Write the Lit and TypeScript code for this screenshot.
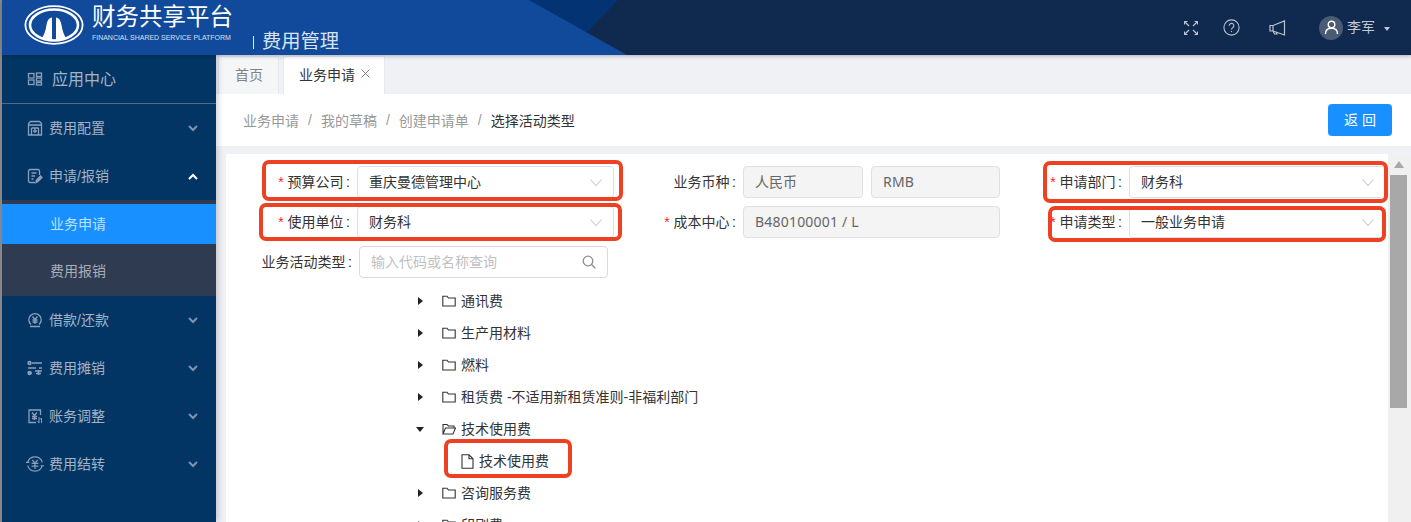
import { LitElement, html, css, svg } from "lit";
import { customElement } from "lit/decorators.js";

const ico = (b: unknown) => html`<svg class="mi" viewBox="0 0 16 16" fill="none" stroke="currentColor" stroke-width="1.3">${b}</svg>`;
const icons: Record<string, unknown> = {
  apps: ico(svg`<rect x="1.5" y="2.5" width="5.5" height="4.5"/><rect x="1.5" y="9" width="5.5" height="4.5"/><rect x="9.5" y="2" width="5" height="3.5"/><rect x="9.5" y="7" width="5" height="3"/><rect x="9.5" y="11.5" width="5" height="2.5"/>`),
  config: ico(svg`<path d="M1.5 15V3.5L3.5 1.5H12.5L14.5 3.5V15Z"/><path d="M1.5 5H14.5M4.5 8H11.5M4.5 8V15M11.5 8V15M8 8V13M6 11H10"/>`),
  apply: ico(svg`<path d="M8 14.5H3A1.5 1.5 0 0 1 1.5 13V3A1.5 1.5 0 0 1 3 1.5H11A1.5 1.5 0 0 1 12.5 3V7"/><path d="M4.5 5H9.5M4.5 8H8M4.5 11H6.5"/><path d="M9 14.5L9.5 12L13.5 8L15 9.5L11 13.5Z" fill="currentColor"/>`),
  loan: ico(svg`<path d="M4 12.5A6.2 6.2 0 1 1 12 12.5"/><path d="M3 14.5H13M5.5 4.5L8 7.5L10.5 4.5M8 7.5V12M5.5 8H10.5M5.5 10H10.5"/>`),
  amort: ico(svg`<g stroke-width="1.6"><circle cx="2.5" cy="3" r="1.4"/><path d="M5 3H15M1 8H9M12 8H15M1 13H5"/><circle cx="2.5" cy="13" r="1.4"/><path d="M8 11H15M9 13.5H14M11.5 10V15"/></g>`),
  adjust: ico(svg`<path d="M13.5 7V2H2V14.5H9"/><path d="M5 4.5L7.5 7.5L10 4.5M7.5 7.5V12M5 8.5H10M5 10.5H10"/><path d="M12 9V15M14.5 10V15M10.5 13L12 15M13 11.5L14.5 10" stroke-width="1"/>`),
  carry: html`<svg class="mi big" viewBox="0 0 16 16" fill="none" stroke="currentColor" stroke-width="1.1"><path d="M1.5 6.5A6.8 6.8 0 0 1 14.5 6.5M14.5 9.500A6.8 6.8 0 0 1 1.5 9.500"/><path d="M5.500 4.500L8 7L10.500 4.500M8 7V12.500M5 7.500H11M5 9.800H11"/><path d="M0 6.500H3M13 9.500H16" stroke-width="1"/></svg>`,
};

const menus = [
  { k: "config", t: "费用配置" },
  { k: "apply", t: "申请/报销", open: true },
  { k: "loan", t: "借款/还款" },
  { k: "amort", t: "费用摊销" },
  { k: "adjust", t: "账务调整" },
  { k: "carry", t: "费用结转" },
];

const tree = [
  { t: "通讯费" },
  { t: "生产用材料" },
  { t: "燃料" },
  { t: "租赁费 -不适用新租赁准则-非福利部门" },
  { t: "技术使用费", open: true, child: "技术使用费" },
  { t: "咨询服务费" },
  { t: "印刷费" },
];

const marks = [
  { x: 262, y: 160, w: 361, h: 41 },
  { x: 259, y: 203, w: 363, h: 38 },
  { x: 1043, y: 161, w: 345, h: 42 },
  { x: 1048, y: 206, w: 338, h: 36 },
  { x: 444, y: 439, w: 128, h: 39 },
];

@customElement("app-root")
export class AppRoot extends LitElement {
  static styles = css`
    :host { display: block; height: 522px; overflow: hidden; font-family: "Liberation Sans", "Noto Sans CJK SC", sans-serif; font-size: 14px; color: #333; }
    .page { position: relative; height: 522px; display: flex; flex-direction: column; border-left: 2px solid #8c8c8c; background: #f0f1f5; }
    .header { position: relative; flex: 0 0 55px; display: flex; align-items: center; background: #10294f; color: #fff; overflow: hidden; box-shadow: 0 1px 4px rgba(0,21,41,.3); z-index: 3; }
    .header::before { content: ""; position: absolute; inset: 0; background: #033372; clip-path: polygon(500px 0, 616px 0, 585px 32px); }
    .header::after { content: ""; position: absolute; inset: 0; z-index: 0; background: #114a9a; clip-path: polygon(0 0, 527px 0, 625px 55px, 0 55px); }
    .brand { position: relative; z-index: 1; display: flex; align-items: flex-start; height: 55px; }
    .logo { width: 60px; height: 40px; margin: 5px 0 0 22px; flex: none; }
    .names { margin-left: 8px; width: 142px; }
    .cn { font-size: 23.5px; line-height: 24px; margin-top: 5px; white-space: nowrap; letter-spacing: 0; }
    .en { font-size: 7px; line-height: 8px; margin-top: 5px; white-space: nowrap; letter-spacing: -.02px; color: #d6e0f0; }
    .module { display: flex; align-items: center; margin: 29px 0 0 19px; font-size: 19.3px; line-height: 26px; color: #d8e2f0; }
    .module i { display: block; width: 1px; height: 13px; background: #dfe7f2; margin-right: 8px; }
    .tools { position: relative; z-index: 1; margin-left: auto; display: flex; align-items: center; color: #b9c2cf; padding-right: 21px; }
    .tools svg.t { display: block; }
    .t1 { width: 14px; height: 14px; margin-right: 25px; }
    .t2 { width: 17px; height: 17px; margin-right: 29px; }
    .t3 { width: 17px; height: 16px; margin-right: 33px; }
    .avatar { width: 24px; height: 24px; border-radius: 50%; background: #4a5b74; display: flex; align-items: center; justify-content: center; color: #fff; }
    .user { margin-left: 4px; padding-bottom: 3px; font-size: 14px; color: #c0c8d3; }
    .caret { width: 0; height: 0; margin: 2px 0 0 9px; border: 3.5px solid transparent; border-top: 4px solid #c0c8d3; border-bottom: 0; }

    .body { flex: 1; display: flex; min-height: 0; }
    .side { flex: 0 0 214px; background: #023564; color: #a3b3c7; box-shadow: 2px 0 6px rgba(0,21,41,.2); z-index: 2; }
    .app { height: 48px; display: flex; align-items: center; padding-left: 25px; font-size: 16px; border-bottom: 1px solid #4c6d90; }
    .app span { margin-left: 9px; padding-bottom: 2px; }
    .mi { width: 16px; height: 16px; flex: none; display: block; opacity: .85; }
    .mi.big { width: 18px; height: 18px; margin: 0 -1px; }
    .item { height: 48px; display: flex; align-items: center; padding-left: 25px; color: #a3b3c7; }
    .item span { margin-left: 6px; flex: 1; padding-bottom: 2px; }
    .chev { width: 10px; height: 7px; margin-right: 18px; color: #7e93ac; }
    .item.open .chev { color: #fff; }
    .sub { background: #2f3b50; padding-top: 4px; border-top: 0; }
    .sub div { box-sizing: border-box; height: 40px; display: flex; align-items: center; padding: 0 0 2px 48px; color: #a9adb6; }
    .sub .on { background: #1890ff; color: #bfe0ff; }
    .sub .off { height: 52px; padding-top: 2px; }

    .main { flex: 1; min-width: 0; display: flex; flex-direction: column; }
    .tabs { flex: 0 0 39px; display: flex; align-items: flex-end; padding-left: 2px; gap: 4px; }
    .tab { height: 38px; box-sizing: border-box; display: flex; align-items: center; border: 1px solid #e8e9ee; border-bottom: 0; color: #828282; padding: 0 15px 4px 16px; background: #f5f6f8; }
    .tab.on { background: #fff; color: #333; gap: 6px; padding: 0 14px 4px 15px; }
    .x { width: 9px; height: 9px; color: #808080; }
    .crumb { flex: 0 0 52px; background: #fff; display: flex; align-items: center; padding: 0 19px 0 27px; color: #999; margin-bottom: 8px; }
    .crumb i { font-style: normal; margin: 0 9px; color: #999; }
    .crumb b { font-weight: 400; color: #333; }
    .back { margin-left: auto; width: 64px; height: 32px; padding: 0 0 2px; border-radius: 4px; background: #1890ff; color: #fff; border: 0; font: inherit; }
    .wrap { flex: 1; min-height: 0; display: flex; margin-left: 10px; }
    .content { flex: 1; min-width: 0; background: #fff; padding-top: 12px; overflow: hidden; }
    .bar { flex: 0 0 23px; position: relative; background: #f0f0f0; }
    .bar::before { content: ""; position: absolute; top: 7px; left: 6px; border: 5px solid transparent; border-top: 0; border-bottom: 7px solid #a8a8a8; }
    .thumb { position: absolute; left: 2px; top: 21px; width: 17px; height: 233px; background: #a8a8a8; }

    .form { display: grid; grid-template-columns: 388px 386px 388px; row-gap: 8px; }
    .field { display: flex; height: 32px; align-items: center; }
    .lab { flex: none; box-sizing: border-box; width: 131px; padding: 0 7px 2px 0; text-align: right; white-space: nowrap; color: #333; }
    .c2 .lab, .c3 .lab { width: 129px; }
    .lab em { font-style: normal; color: #f5222d; margin-right: 4px; }
    .lab u { text-decoration: none; margin-left: 2.5px; }
    .ctl { box-sizing: border-box; height: 32px; flex: 1; display: flex; align-items: center; padding: 0 11px 2px; border: 1px solid #dcdfe6; border-radius: 4px; background: #fff; white-space: nowrap; }
    .ctl svg { margin: 2px 0 0 auto; flex: none; }
    .c1 .ctl { flex: 0 0 257px; }
    .c3 .ctl { flex: 0 0 257px; }
    .dis { background: #f4f4f4; color: #666; border-color: #e0e0e0; }
    .latin { font-family: "Noto Sans", sans-serif; letter-spacing: .2px; }
    .pair { display: flex; gap: 8px; flex: 1; }
    .pair .ctl:first-child { flex: 0 0 120px; }
    .dis.rmb { flex: 0 0 129px; }
    .search { grid-column: 1 / span 3; }
    .search .lab { width: 133px; }
    .search .ctl { flex: 0 0 249px; color: #bfbfbf; border-color: #d9d9d9; }
    .chevron { width: 12px; height: 7px; color: #c6c9d0; }
    .mag { width: 14px; height: 14px; color: #8c8c8c; }

    .tree { margin-top: 7px; padding-left: 190px; }
    .node { height: 32px; display: flex; align-items: center; white-space: nowrap; }
    .node span.txt { padding-bottom: 2px; }
    .arrow { width: 8px; display: flex; justify-content: center; margin-right: 18px; }
    .arrow i { display: block; border: 4px solid transparent; border-left: 5px solid #222; border-right: 0; }
    .open .arrow i { border: 4.5px solid transparent; border-top: 5px solid #222; border-bottom: 0; }
    .folder { width: 14px; height: 12px; margin-right: 5px; flex: none; color: #333; }
    .leaf { padding-left: 45px; }
    .file { width: 13px; height: 15px; margin-right: 5px; color: #333; }

    .mark { position: absolute; box-sizing: border-box; border: 4px solid #ee4023; border-radius: 7px; z-index: 4; pointer-events: none; }
  `;

  render() {
    const chevron = html`<svg class="chevron" viewBox="0 0 12 7" fill="none" stroke="currentColor" stroke-width="1.1"><path d="M.5 .5L6 6.5L11.5 .5"/></svg>`;
    const side = (m: any) => html`
      <div class="item ${m.open ? "open" : ""}">
        ${icons[m.k]}<span>${m.t}</span>
        <svg class="chev" viewBox="0 0 10 7" fill="none" stroke="currentColor" stroke-width="2"><path d=${m.open ? "M1 6L5 2L9 6" : "M1 1L5 5L9 1"}/></svg>
      </div>
      ${m.open ? html`<div class="sub"><div class="on">业务申请</div><div class="off">费用报销</div></div>` : ""}`;
    const folder = (open: boolean) => html`<svg class="folder" viewBox="0 0 14 12" fill="none" stroke="currentColor" stroke-width="1.1">
      ${open
        ? svg`<path d="M1 11V1.5H5L6.5 3H12V5M1 11H11L13.5 5H3.5Z"/>`
        : svg`<path d="M.8 11V1.2H5L6.5 3H13.2V11Z"/>`}</svg>`;
    return html`
      <div class="page">
        <header class="header">
          <div class="brand">
            <svg class="logo" viewBox="0 0 60 40" fill="none">
              <ellipse cx="30" cy="20" rx="28.6" ry="18.8" stroke="#fff" stroke-width="1.8"/>
              <ellipse cx="30" cy="20" rx="24" ry="15.5" stroke="#fff" stroke-width="2.6"/>
              <path fill="#fff" d="M18 33C20 30 21.500 26 22.500 20C23.500 15 25 13 28 12.500V34.500C24 34.500 21 34 18 33Z"/>
              <path fill="#fff" d="M42 33C40 30 38.500 26 37.500 20C36.500 15 35 13 32 12.500V34.500C36 34.500 39 34 42 33Z"/>
            </svg>
            <div class="names">
              <div class="cn">财务共享平台</div>
              <div class="en">FINANCIAL SHARED SERVICE PLATFORM</div>
            </div>
            <div class="module"><i></i>费用管理</div>
          </div>
          <div class="tools">
            <svg class="t t1" viewBox="0 0 14 14" fill="none" stroke="currentColor" stroke-width="1.2"><path d="M1 1L5 5M13 1L9 5M1 13L5 9M13 13L9 9"/><path d="M.5 3.500V.5H3.500M10.500 .5H13.500V3.500M.5 10.500V13.500H3.500M10.500 13.500H13.500V10.500"/></svg>
            <svg class="t t2" viewBox="0 0 17 17" fill="none" stroke="currentColor" stroke-width="1.1"><circle cx="8.500" cy="8.500" r="7.600"/><path d="M6.200 6.700A2.300 2.300 0 1 1 9.900 8.500C9 9.100 8.500 9.500 8.500 10.600"/><circle cx="8.500" cy="12.500" r=".7" fill="currentColor" stroke="none"/></svg>
            <svg class="t t3" viewBox="0 0 17 16" fill="none" stroke="currentColor" stroke-width="1.2"><path d="M15.500 1V15L4 11H1V5.500H4Z"/><path d="M4 5.500V11M4 11L5.500 14H8L7 12"/></svg>
            <div class="avatar"><svg width="15" height="15" viewBox="0 0 15 15" fill="none" stroke="currentColor" stroke-width="1.4"><circle cx="7.500" cy="4.500" r="3.300"/><path d="M1.500 14C1.500 10 4 8.300 7.500 8.300C11 8.300 13.500 10 13.500 14"/></svg></div>
            <span class="user">李军</span><i class="caret"></i>
          </div>
        </header>
        <div class="body">
          <aside class="side">
            <div class="app">${icons.apps}<span>应用中心</span></div>
            ${menus.map(side)}
          </aside>
          <main class="main">
            <nav class="tabs">
              <div class="tab">首页</div>
              <div class="tab on">业务申请<svg class="x" viewBox="0 0 9 9" fill="none" stroke="currentColor"><path d="M.5 .5L8.500 8.500M8.500 .5L.5 8.500"/></svg></div>
            </nav>
            <div class="crumb">业务申请<i>/</i>我的草稿<i>/</i>创建申请单<i>/</i><b>选择活动类型</b><button class="back">返 回</button></div>
            <div class="wrap">
              <section class="content">
                <div class="form">
                  <div class="field c1"><div class="lab"><em>*</em>预算公司<u>:</u></div><div class="ctl">重庆曼德管理中心${chevron}</div></div>
                  <div class="field c2"><div class="lab">业务币种<u>:</u></div><div class="pair"><div class="ctl dis">人民币</div><div class="ctl dis rmb latin">RMB</div></div></div>
                  <div class="field c3"><div class="lab"><em>*</em>申请部门<u>:</u></div><div class="ctl">财务科${chevron}</div></div>
                  <div class="field c1"><div class="lab"><em>*</em>使用单位<u>:</u></div><div class="ctl">财务科${chevron}</div></div>
                  <div class="field c2"><div class="lab"><em>*</em>成本中心<u>:</u></div><div class="ctl dis latin">B480100001 / L</div></div>
                  <div class="field c3"><div class="lab"><em>*</em>申请类型<u>:</u></div><div class="ctl">一般业务申请${chevron}</div></div>
                  <div class="field search"><div class="lab">业务活动类型<u>:</u></div><div class="ctl">输入代码或名称查询<svg class="mag" viewBox="0 0 14 14" fill="none" stroke="currentColor" stroke-width="1.3"><circle cx="6" cy="6" r="4.800"/><path d="M9.500 9.500L13.300 13.300"/></svg></div></div>
                </div>
                <div class="tree">
                  ${tree.map((n) => html`
                    <div class="node ${n.open ? "open" : ""}"><span class="arrow"><i></i></span>${folder(!!n.open)}<span class="txt">${n.t}</span></div>
                    ${n.child ? html`<div class="node leaf"><svg class="file" viewBox="0 0 13 15" fill="none" stroke="currentColor" stroke-width="1.1"><path d="M1 .8H8L12 4.800V14.200H1Z"/><path d="M8 .8V4.800H12"/></svg><span class="txt">${n.child}</span></div>` : ""}`)}
                </div>
              </section>
              <div class="bar"><div class="thumb"></div></div>
            </div>
          </main>
        </div>
        ${marks.map((m) => html`<div class="mark" style="left:${m.x - 2}px;top:${m.y}px;width:${m.w}px;height:${m.h}px"></div>`)}
      </div>
    `;
  }
}
